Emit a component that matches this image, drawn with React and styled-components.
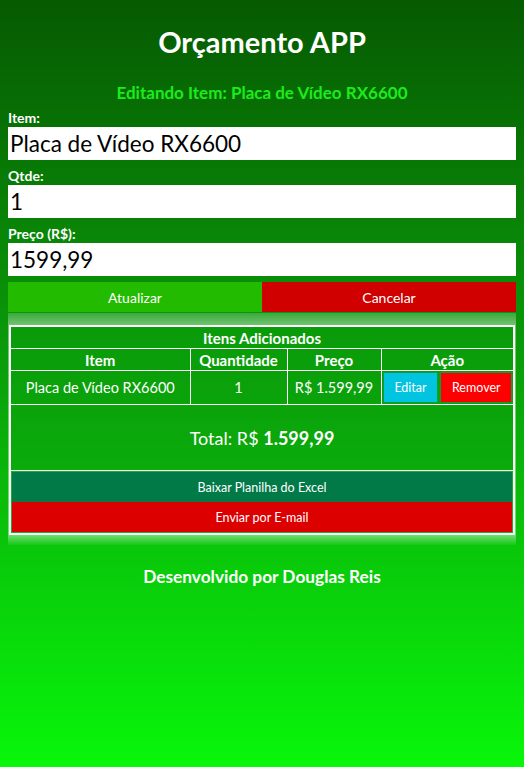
import React from "react";
import styled, { createGlobalStyle } from "styled-components";

const GlobalStyle = createGlobalStyle`
  html, body {
    margin: 0;
    padding: 0;
    min-height: 100%;
  }

  body {
    min-height: 767px;
    background: linear-gradient(to bottom, #065a01 0%, #0a9a0a 45%, #08f70a 100%);
    font-family: Lato, "Open Sans", sans-serif;
    color: #fff;
  }
`;

const Page = styled.div`
  padding: 0 8px;
`;

const Title = styled.h1`
  margin: 0;
  padding-top: 24px;
  text-align: center;
  font-size: 29px;
  line-height: 36px;
  font-weight: 700;
  color: #fff;
`;

const EditingNote = styled.h2`
  margin: 22px 0 0;
  text-align: center;
  font-size: 17px;
  line-height: 22px;
  font-weight: 700;
  color: #1ceb1c;
`;

const Form = styled.form`
  display: flex;
  flex-direction: column;
`;

const Label = styled.label`
  display: block;
  margin-top: ${(p) => (p.$first ? "5px" : "7px")};
  font-size: 14px;
  line-height: 18px;
  font-weight: 700;
`;

const Input = styled.input`
  display: block;
  width: 100%;
  box-sizing: border-box;
  height: 33px;
  border: none;
  outline: none;
  padding: 0 2px;
  background: #fff;
  color: #000;
  font-family: Lato, "Open Sans", sans-serif;
  font-size: 22.5px;
`;

const ButtonRow = styled.div`
  display: grid;
  grid-template-columns: 1fr 1fr;
  margin-top: 6px;
`;

const Button = styled.button`
  height: ${(p) => p.$h || "30px"};
  border: none;
  background: ${(p) => p.$bg};
  color: #fff;
  font-family: Lato, "Open Sans", sans-serif;
  font-size: ${(p) => p.$size || "14px"};
  cursor: pointer;
`;

const Glow = styled.div`
  margin-top: 1px;
  padding: 12px 1px 10px;
  background: linear-gradient(
    to bottom,
    rgba(255, 255, 255, 0.2) 0px,
    rgba(255, 255, 255, 0.42) 12px,
    rgba(255, 255, 255, 0.42) calc(100% - 10px),
    rgba(255, 255, 255, 0.05) 100%
  );
`;

const Table = styled.table`
  width: 100%;
  border-collapse: collapse;
  border: 2px solid #fff;
  background: linear-gradient(to bottom, #0a9a0a, #0bb30b);
  color: #fff;
  font-size: 14.5px;

  th,
  td {
    border: 1px solid #fff;
    text-align: center;
    padding: 0;
  }

  th {
    height: 21px;
    font-size: 15px;
    font-weight: 700;
  }
`;

const DataCell = styled.td`
  height: 32px;
`;

const ActionCell = styled.td`
  && {
    padding: 1px;
  }
`;

const Actions = styled.div`
  display: flex;
  gap: 2px;
`;

const SmallButton = styled.button`
  height: 31px;
  flex: ${(p) => p.$flex};
  border: 1px solid #109a40;
  background: ${(p) => p.$bg};
  color: #fff;
  font-family: Lato, "Open Sans", sans-serif;
  font-size: 12.5px;
`;

const TotalCell = styled.td`
  height: 65px;
  font-size: 18px;

  strong {
    font-weight: 700;
  }
`;

const ExportCell = styled.td`
  && {
    padding: 0;
  }
`;

const ExportStack = styled.div`
  display: flex;
  flex-direction: column;
  border: 1px solid #18b030;
`;

const Footer = styled.p`
  margin: 22px 0 0;
  text-align: center;
  font-size: 17.3px;
  line-height: 20px;
  font-weight: 700;
`;

export default function App() {
  return (
    <>
      <GlobalStyle />
      <Page>
        <Title>Orçamento APP</Title>
        <EditingNote>Editando Item: Placa de Vídeo RX6600</EditingNote>
        <Form onSubmit={(e) => e.preventDefault()}>
          <Label $first>Item:</Label>
          <Input defaultValue="Placa de Vídeo RX6600" />
          <Label>Qtde:</Label>
          <Input defaultValue="1" />
          <Label>Preço (R$):</Label>
          <Input defaultValue="1599,99" />
          <ButtonRow>
            <Button type="button" $bg="#22bb00">Atualizar</Button>
            <Button type="button" $bg="#d00000">Cancelar</Button>
          </ButtonRow>
        </Form>
        <Glow>
          <Table>
            <colgroup>
              <col style={{ width: "180px" }} />
              <col style={{ width: "97px" }} />
              <col style={{ width: "94px" }} />
              <col />
            </colgroup>
            <thead>
              <tr>
                <th colSpan={4}>Itens Adicionados</th>
              </tr>
              <tr>
                <th>Item</th>
                <th>Quantidade</th>
                <th>Preço</th>
                <th>Ação</th>
              </tr>
            </thead>
            <tbody>
              <tr>
                <DataCell>Placa de Vídeo RX6600</DataCell>
                <DataCell>1</DataCell>
                <DataCell>R$ 1.599,99</DataCell>
                <ActionCell>
                  <Actions>
                    <SmallButton $bg="#00c4e0" $flex="54">Editar</SmallButton>
                    <SmallButton $bg="#ff0000" $flex="74">Remover</SmallButton>
                  </Actions>
                </ActionCell>
              </tr>
              <tr>
                <TotalCell colSpan={4}>
                  Total: R$ <strong>1.599,99</strong>
                </TotalCell>
              </tr>
              <tr>
                <ExportCell colSpan={4}>
                  <ExportStack>
                    <Button type="button" $bg="#017a48" $size="12.5px">
                      Baixar Planilha do Excel
                    </Button>
                    <Button type="button" $bg="#dd0000" $size="12.5px">
                      Enviar por E-mail
                    </Button>
                  </ExportStack>
                </ExportCell>
              </tr>
            </tbody>
          </Table>
        </Glow>
        <Footer>Desenvolvido por Douglas Reis</Footer>
      </Page>
    </>
  );
}
